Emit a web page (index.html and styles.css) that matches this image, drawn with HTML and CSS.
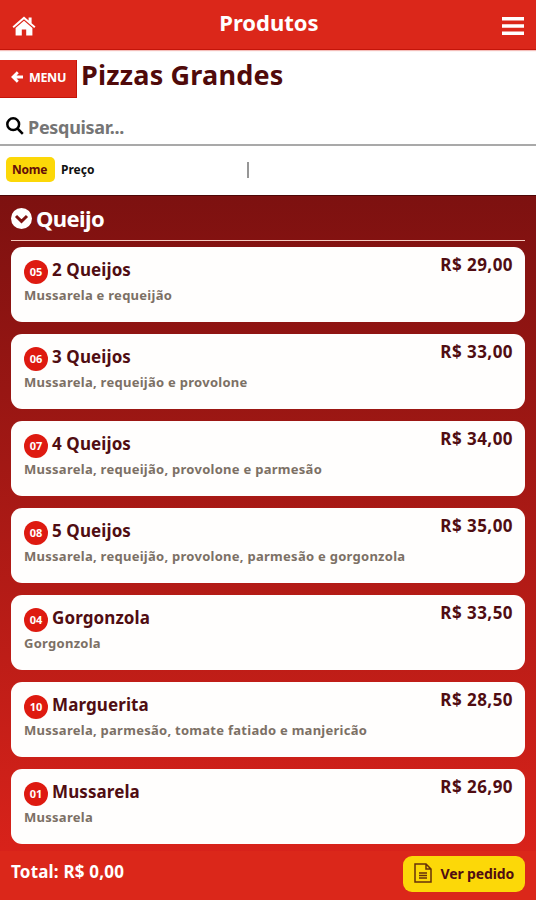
FILE: index.html
```html
<!DOCTYPE html>
<html lang="pt-BR">
<head>
    <meta charset="UTF-8">
    <meta name="viewport" content="width=device-width, initial-scale=1.0">
    <title>Produtos</title>
    <link rel="stylesheet" href="styles.css">
</head>
<body>
    <header class="topbar">
        <svg class="icon-home" viewBox="0 0 24 20">
            <path d="M12 0.5L0.5 10.6l1.3 1.5L12 3.3l10.2 8.8 1.3-1.5-3.9-3.4V1.5h-3v3z"/>
            <path d="M12 4.8L3.6 12v7.5h6.2v-6h4.4v6h6.2V12z"/>
        </svg>
        <h1 class="topbar-title">Produtos</h1>
        <svg class="icon-bars" viewBox="0 0 22 18">
            <path d="M0 0h22v3.4H0zM0 7.3h22v3.4H0zM0 14.6h22V18H0z"/>
        </svg>
    </header>

    <div class="category">
        <a class="btn-menu">
            <svg class="icon-arrow" viewBox="0 0 12 12"><path d="M6.8 1.2L2 6l4.8 4.8M2.5 6H12"/></svg>
            <span>MENU</span>
        </a>
        <h2 class="category-title">Pizzas Grandes</h2>
    </div>

    <div class="search">
        <svg class="icon-search" viewBox="0 0 18 18"><circle cx="7.2" cy="7.2" r="5.9"/><path d="M11.5 11.5l5.3 5.3"/></svg>
        <span class="search-text">Pesquisar...</span>
    </div>

    <div class="sort">
        <span class="sort-item active">Nome</span>
        <span class="sort-item">Preço</span>
        <span class="sort-divider"></span>
    </div>

    <main class="products">
        <div class="group">
            <svg class="icon-chevron" viewBox="0 0 21 21"><circle cx="10.5" cy="10.5" r="10.5"/><path d="M5 8l5.5 5.3L16 8"/></svg>
            <h3 class="group-title">Queijo</h3>
        </div>

        <div class="card">
            <div class="card-info">
                <div class="card-name"><span class="code">05</span><span>2 Queijos</span></div>
                <p class="card-desc">Mussarela e requeijão</p>
            </div>
            <span class="price">R$ 29,00</span>
        </div>
        <div class="card">
            <div class="card-info">
                <div class="card-name"><span class="code">06</span><span>3 Queijos</span></div>
                <p class="card-desc">Mussarela, requeijão e provolone</p>
            </div>
            <span class="price">R$ 33,00</span>
        </div>
        <div class="card">
            <div class="card-info">
                <div class="card-name"><span class="code">07</span><span>4 Queijos</span></div>
                <p class="card-desc">Mussarela, requeijão, provolone e parmesão</p>
            </div>
            <span class="price">R$ 34,00</span>
        </div>
        <div class="card">
            <div class="card-info">
                <div class="card-name"><span class="code">08</span><span>5 Queijos</span></div>
                <p class="card-desc">Mussarela, requeijão, provolone, parmesão e gorgonzola</p>
            </div>
            <span class="price">R$ 35,00</span>
        </div>
        <div class="card">
            <div class="card-info">
                <div class="card-name"><span class="code">04</span><span>Gorgonzola</span></div>
                <p class="card-desc">Gorgonzola</p>
            </div>
            <span class="price">R$ 33,50</span>
        </div>
        <div class="card">
            <div class="card-info">
                <div class="card-name"><span class="code">10</span><span>Marguerita</span></div>
                <p class="card-desc">Mussarela, parmesão, tomate fatiado e manjericão</p>
            </div>
            <span class="price">R$ 28,50</span>
        </div>
        <div class="card">
            <div class="card-info">
                <div class="card-name"><span class="code">01</span><span>Mussarela</span></div>
                <p class="card-desc">Mussarela</p>
            </div>
            <span class="price">R$ 26,90</span>
        </div>
    </main>

    <footer class="footer">
        <span class="total">Total: R$ 0,00</span>
        <a class="btn-order">
            <svg class="icon-file" viewBox="0 0 18 20">
                <path d="M1 1h11l5 5v13H1zM12 1v5h5M5 10h8M5 12.5h8M5 15h8"/>
            </svg>
            <span>Ver pedido</span>
        </a>
    </footer>
</body>
</html>
```
FILE: styles.css
```css
* {
    box-sizing: border-box;
}
body {
    margin: 0;
    height: 900px;
    display: flex;
    flex-direction: column;
    font-family: "Noto Sans", "Open Sans", sans-serif;
    font-weight: 700;
    background-color: #fff;
    overflow: hidden;
}
h1, h2, h3, p {
    margin: 0;
}
svg {
    display: block;
    flex: none;
}
.topbar {
    height: 50px;
    padding: 0 12px 5px 12px;
    display: grid;
    grid-template-columns: 24px 1fr 22px;
    align-items: center;
    background-color: #db271a;
    border-bottom: 1px solid #c41409;
    box-shadow: 0 1px 1px rgba(219, 39, 26, 0.3);
    color: #fff;
}
.topbar-title {
    font-size: 22px;
    line-height: 30px;
    text-align: center;
}
.icon-home {
    width: 24px;
    height: 20px;
    margin-top: 8px;
    fill: #fff;
}
.icon-bars {
    width: 22px;
    height: 18px;
    margin-top: 8px;
    fill: #fff;
}
.category {
    height: 58px;
    padding-top: 10px;
    display: flex;
    align-items: flex-start;
}
.btn-menu {
    width: 77px;
    height: 38px;
    padding: 0 11px 3px;
    display: flex;
    align-items: center;
    gap: 6px;
    background-color: #db271a;
    border-right: 1px solid #c41409;
    border-bottom: 1px solid #c41409;
    color: #fff;
    font-size: 12.5px;
    letter-spacing: -0.35px;
}
.icon-arrow {
    width: 12px;
    height: 12px;
    fill: none;
    stroke: #fff;
    stroke-width: 2.8;
}
.category-title {
    margin-left: 4px;
    font-size: 27px;
    line-height: 30px;
    letter-spacing: 0.2px;
    color: #500a0a;
}
.search {
    height: 38px;
    padding: 0 6px 1px;
    display: flex;
    align-items: center;
    gap: 4px;
    border-bottom: 2px solid #a9a9a9;
}
.icon-search {
    width: 18px;
    height: 18px;
    fill: none;
    stroke: #000;
    stroke-width: 2.5;
}
.search-text {
    padding-top: 2px;
    font-size: 18px;
    line-height: 24px;
    letter-spacing: -0.3px;
    color: #757575;
}
.sort {
    height: 49px;
    padding: 11px 6px;
    display: flex;
    align-items: flex-start;
    font-size: 12px;
    line-height: 25px;
    color: #111;
}
.sort-item {
    height: 25px;
    padding: 0 6px;
}
.sort-item.active {
    width: 49px;
    border-radius: 5px;
    background-color: #fcd808;
    color: #650e08;
    letter-spacing: -0.2px;
}
.sort-divider {
    width: 2px;
    height: 16px;
    margin: 5px 0 0 147px;
    background-color: #969696;
}
.products {
    height: 656px;
    padding: 0 11px;
    border-top: 1px solid #4d0707;
    background: linear-gradient(#7d1110, #d8221a);
}
.group {
    height: 45px;
    margin-bottom: 6px;
    display: flex;
    align-items: center;
    gap: 4px;
    border-bottom: 1px solid #f4c9bd;
    color: #fff;
}
.icon-chevron {
    width: 21px;
    height: 21px;
    fill: #fff;
}
.icon-chevron path {
    fill: none;
    stroke: #7d1110;
    stroke-width: 3;
}
.group-title {
    font-size: 22px;
    line-height: 30px;
    letter-spacing: -0.6px;
}
.card {
    height: 75px;
    margin-bottom: 12px;
    padding: 9px 12px 9px 13px;
    display: flex;
    justify-content: space-between;
    border-radius: 11px;
    background-color: #fffefd;
}
.card-name {
    height: 30px;
    padding-bottom: 2px;
    display: flex;
    align-items: center;
    gap: 4px;
    color: #500d12;
    font-size: 17px;
    line-height: 24px;
    letter-spacing: 0.1px;
}
.code {
    width: 24px;
    height: 24px;
    margin-top: 4px;
    border-radius: 50%;
    background-color: #de1a10;
    color: #fff;
    font-size: 11px;
    letter-spacing: 0;
    text-align: center;
}
.card-desc {
    font-size: 13px;
    line-height: 18px;
    letter-spacing: 0.27px;
    color: #7c7065;
}
.price {
    font-size: 17px;
    line-height: 18px;
    letter-spacing: 0.45px;
    color: #500d12;
}
.footer {
    flex: 1;
    padding: 5px 11px 0;
    display: flex;
    align-items: flex-start;
    justify-content: space-between;
    background-color: #db271a;
    color: #fff;
}
.total {
    font-size: 17px;
    line-height: 32px;
    letter-spacing: 0.2px;
}
.btn-order {
    width: 122px;
    height: 36px;
    padding: 0 11px 2px;
    display: flex;
    align-items: center;
    justify-content: space-between;
    border-radius: 9px;
    background-color: #fcd808;
    color: #500d12;
    font-size: 14px;
    letter-spacing: -0.15px;
}
.icon-file {
    width: 18px;
    height: 20px;
    fill: none;
    stroke: #65310a;
    stroke-width: 1.5;
}
```
